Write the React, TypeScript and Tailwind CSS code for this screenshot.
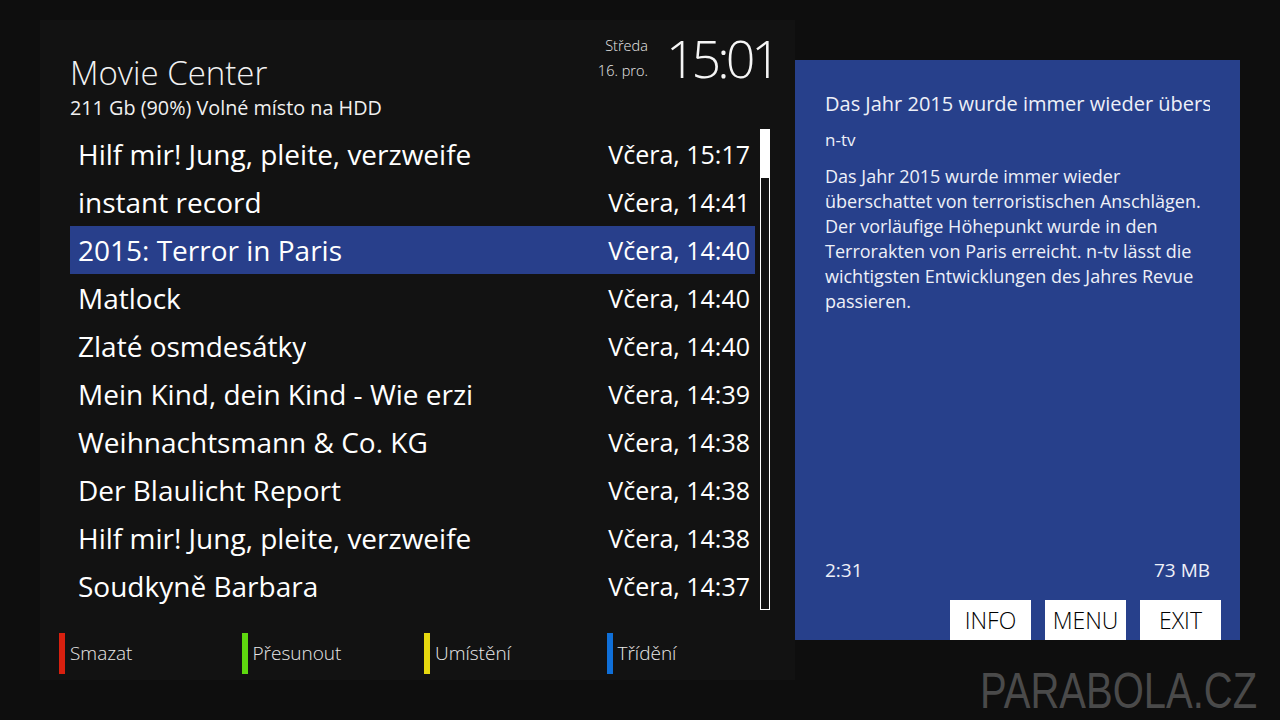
import React from "react";

const rows: [string, string][] = [
  ["Hilf mir! Jung, pleite, verzweife", "Včera, 15:17"],
  ["instant record", "Včera, 14:41"],
  ["2015: Terror in Paris", "Včera, 14:40"],
  ["Matlock", "Včera, 14:40"],
  ["Zlaté osmdesátky", "Včera, 14:40"],
  ["Mein Kind, dein Kind - Wie erzi", "Včera, 14:39"],
  ["Weihnachtsmann & Co. KG", "Včera, 14:38"],
  ["Der Blaulicht Report", "Včera, 14:38"],
  ["Hilf mir! Jung, pleite, verzweife", "Včera, 14:38"],
  ["Soudkyně Barbara", "Včera, 14:37"],
];

const keys: [string, string][] = [
  ["bg-[#d8200f]", "Smazat"],
  ["bg-[#5ed80f]", "Přesunout"],
  ["bg-[#e6d80f]", "Umístění"],
  ["bg-[#0f6fd8]", "Třídění"],
];

export default function App() {
  return (
    <div
      className="relative w-[1280px] h-[720px] bg-[#0e0e0e] text-white flex overflow-hidden"
      style={{ fontFamily: '"Open Sans", "Noto Sans", sans-serif' }}
    >
      <div className="ml-[40px] mt-[20px] w-[755px] h-[660px] bg-[#121212] flex flex-col">
        <div className="flex justify-between pl-[30px] pr-[22px] h-[109px]">
          <div className="pt-[33px]">
            <div className="text-[33px] font-light leading-[40px] text-[#f2f2f2]">Movie Center</div>
            <div className="text-[19.8px] leading-[26px] text-[#f0f0f0] mt-[2px]">211 Gb (90%) Volné místo na HDD</div>
          </div>
          <div className="flex items-start pt-[12px] gap-[18px]">
            <div className="flex flex-col items-end text-[14.5px] font-light leading-[25px] text-[#e8e8e8] pt-[1px]">
              <span>Středa</span>
              <span>16. pro.</span>
            </div>
            <div className="text-[52px] font-light leading-[52px] tracking-[-4px] text-[#f5f5f5] -mr-[4px]">15:01</div>
          </div>
        </div>
        <div className="flex pl-[30px] h-[481px]">
          <div className="w-[685px] flex flex-col pt-[1px]">
            {rows.map(([t, d], i) => (
              <div
                key={i}
                className={`h-[48px] flex items-center justify-between pl-[8px] pr-[5px] ${
                  i === 2 ? "bg-[#283f8b]" : ""
                }`}
              >
                <span className="whitespace-nowrap overflow-hidden text-[28px] leading-[36px] -mt-[1px]">{t}</span>
                <span className="whitespace-nowrap text-[25px] leading-[36px]">{d}</span>
              </div>
            ))}
          </div>
          <div className="ml-[5px] w-[10px] h-[481px] border border-white flex flex-col">
            <div className="h-[48px] bg-white" />
          </div>
        </div>
        <div className="flex pl-[19px] mt-[23px]">
          {keys.map(([c, l]) => (
            <div key={l} className="w-[182.5px] flex items-center">
              <div className={`w-[6px] h-[41px] ${c}`} />
              <span className="ml-[5px] text-[19px] font-light text-[#e8e8e8]">{l}</span>
            </div>
          ))}
        </div>
      </div>
      <div className="mt-[60px] w-[445px] h-[580px] bg-[#27408b] flex flex-col pl-[30px] pr-[30px] text-[#eef0f8]">
        <div className="mt-[30px] text-[20px] leading-[28px] whitespace-nowrap overflow-hidden w-[385px]">
          Das Jahr 2015 wurde immer wieder überschattet von terroristischen Anschlägen.
        </div>
        <div className="mt-[11px] text-[17px] leading-[22px]">n-tv</div>
        <div className="mt-[13px] text-[18px] leading-[25px] w-[388px]">
          Das Jahr 2015 wurde immer wieder überschattet von terroristischen Anschlägen. Der vorläufige Höhepunkt wurde in den Terrorakten von Paris erreicht. n-tv lässt die wichtigsten Entwicklungen des Jahres Revue passieren.
        </div>
        <div className="flex-1" />
        <div className="flex justify-between text-[19px] leading-[24px] w-[385px]">
          <span>2:31</span>
          <span>73 MB</span>
        </div>
        <div className="flex justify-end gap-[14px] mt-[18px] -mr-[11px]">
          {["INFO", "MENU", "EXIT"].map((b) => (
            <div
              key={b}
              className="w-[81px] h-[40px] bg-white text-black text-[23px] font-light flex items-center justify-center"
            >
              {b}
            </div>
          ))}
        </div>
      </div>
      <div
        className="absolute left-[980px] top-[666px] text-[50px] leading-[50px] text-[#4a4a4a] scale-x-[0.8] origin-left whitespace-nowrap"
        style={{ fontFamily: '"Liberation Sans", Arial, sans-serif' }}
      >
        PARABOLA.CZ
      </div>
    </div>
  );
}
